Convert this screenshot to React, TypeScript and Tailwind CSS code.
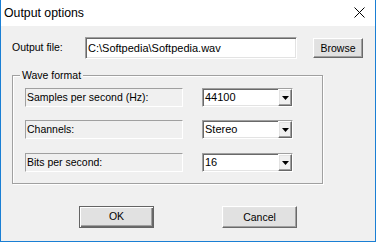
import React from 'react'

const font = { fontFamily: '"Liberation Sans", Arial, sans-serif' }

const sunken =
  'border border-t-[#a0a0a0] border-l-[#a0a0a0] border-b-white border-r-white shadow-[inset_1px_1px_0_#696969,inset_-1px_-1px_0_#e3e3e3]'
const raised =
  'border border-t-white border-l-white border-b-[#696969] border-r-[#696969] shadow-[inset_-1px_-1px_0_#a0a0a0,inset_1px_1px_0_#e3e3e3]'

function Combo({ value }: { value: string }) {
  return (
    <div className={`flex h-[19px] w-[91px] bg-white ${sunken}`}>
      <div className="flex-1 pl-[2px] text-[11px] leading-[17px] text-black">{value}</div>
      <div className={`flex h-[17px] w-[14px] items-center justify-center bg-[#f0f0f0] ${raised}`}>
        <svg width="7" height="4" viewBox="0 0 7 4">
          <path d="M0 0h7L3.5 4z" fill="#000" />
        </svg>
      </div>
    </div>
  )
}

function Field({ label, value, className }: { label: string; value: string; className?: string }) {
  return (
    <div className={`flex items-center ${className ?? ''}`}>
      <div className="h-[19px] w-[158px] border border-t-[#a0a0a0] border-l-[#a0a0a0] border-b-white border-r-white pl-[1px] text-[10.5px] leading-[17px] text-black">
        {label}
      </div>
      <div className="ml-[19px]">
        <Combo value={value} />
      </div>
    </div>
  )
}

export default function App() {
  return (
    <div
      style={font}
      className="relative flex h-[242px] w-[376px] flex-col overflow-hidden border-x border-b border-[#1a7fd4] bg-[#f0f0f0] text-black"
    >
      <div className="flex h-[26px] shrink-0 items-center justify-between bg-white pl-[3px] pr-[10px]">
        <span className="text-[12.3px]">Output options</span>
        <svg width="11" height="11" viewBox="0 0 11 11" className="mb-[1px]">
          <path d="M0.5 0.5l10 10M10.5 0.5l-10 10" stroke="#000" strokeWidth="1" />
        </svg>
      </div>

      <div className="mt-[11px] flex h-[22px] items-center pl-[11px]">
        <span className="w-[73px] text-[10.5px]">Output file:</span>
        <div className={`h-[22px] w-[212px] bg-white pl-[2px] text-[11px] leading-[20px] ${sunken}`}>
          C:\Softpedia\Softpedia.wav
        </div>
        <button className={`ml-[16px] h-[20px] w-[50px] bg-[#e1e1e1] text-[10.5px] leading-[18px] ${raised}`}>
          Browse
        </button>
      </div>

      <div className="relative ml-[11px] mt-[16px] h-[109px] w-[311px] border border-[#a0a0a0] shadow-[1px_1px_0_#fff,inset_1px_1px_0_#fff] px-[12px] pt-[12px]">
        <span className="absolute -top-[8px] left-[7px] bg-[#f0f0f0] px-[2px] text-[10.5px] leading-[14px]">
          Wave format
        </span>
        <Field label="Samples per second (Hz):" value="44100" />
        <Field label="Channels:" value="Stereo" className="mt-[13px]" />
        <Field label="Bits per second:" value="16" className="mt-[14px]" />
      </div>

      <div className="mt-[22px] flex pl-[78px]">
        <button className="h-[22px] w-[75px] border border-[#646464] bg-[#e1e1e1] text-[10.5px] shadow-[inset_1px_1px_0_#fff,inset_-1px_-1px_0_#696969,inset_-2px_-2px_0_#a0a0a0]">
          OK
        </button>
        <button className={`ml-[68px] h-[22px] w-[75px] bg-[#e1e1e1] text-[10.5px] leading-[20px] ${raised}`}>
          Cancel
        </button>
      </div>
    </div>
  )
}
